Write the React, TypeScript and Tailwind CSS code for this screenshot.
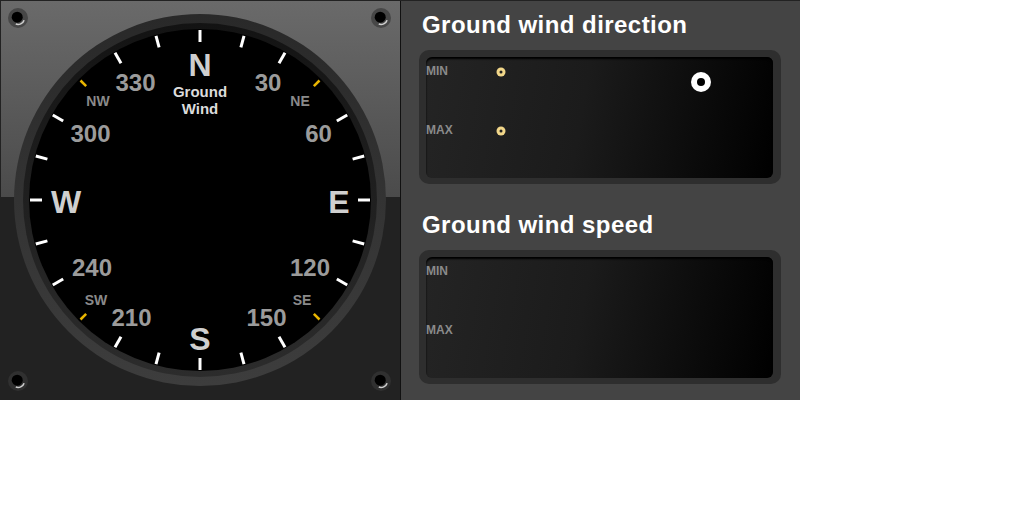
const FONT = "Liberation Sans, Arial, Helvetica, sans-serif";

const cardinals = [
  { t: "N", x: 200, y: 76 },
  { t: "E", x: 339, y: 213 },
  { t: "S", x: 200, y: 350 },
  { t: "W", x: 66, y: 213 },
];

const degrees = [
  { t: "30", x: 268, y: 91 },
  { t: "60", x: 318.5, y: 142 },
  { t: "120", x: 310, y: 276 },
  { t: "150", x: 266.5, y: 326 },
  { t: "210", x: 131.5, y: 326 },
  { t: "240", x: 92, y: 276 },
  { t: "300", x: 90.5, y: 142 },
  { t: "330", x: 135.5, y: 91 },
];

const intercardinals = [
  { t: "NW", x: 98, y: 106 },
  { t: "NE", x: 300, y: 106 },
  { t: "SW", x: 96, y: 305 },
  { t: "SE", x: 302, y: 305 },
];

function Screw({ x, y, fill }: { x: number; y: number; fill: string }) {
  // highlight arc on the lower right of the hole
  const r = 6.5;
  const a1 = (20 * Math.PI) / 180;
  const a2 = (110 * Math.PI) / 180;
  const p1 = [x + r * Math.cos(a1), y + r * Math.sin(a1)];
  const p2 = [x + r * Math.cos(a2), y + r * Math.sin(a2)];
  return (
    <g>
      <circle cx={x} cy={y} r={10} fill={fill} />
      <path
        d={`M${p1[0]} ${p1[1]} A${r} ${r} 0 0 1 ${p2[0]} ${p2[1]}`}
        stroke="#d0d0d0"
        strokeWidth={1.6}
        fill="none"
      />
      <circle cx={x - 0.8} cy={y - 0.8} r={5.5} fill="#000" />
    </g>
  );
}

function Compass() {
  const ticks = Array.from({ length: 24 }, (_, i) => i * 15);
  return (
    <svg width={399} height={399} viewBox="1 1 399 399" className="block">
      <defs>
        <linearGradient id="ring" x1="0" y1="0" x2="0" y2="1">
          <stop offset="0" stopColor="#292929" />
          <stop offset="1" stopColor="#3d3d3d" />
        </linearGradient>
        <linearGradient id="band" x1="0" y1="0" x2="0" y2="1">
          <stop offset="0" stopColor="#131313" />
          <stop offset="1" stopColor="#2c2c2c" />
        </linearGradient>
      </defs>
      <Screw x={18} y={18} fill="#474747" />
      <Screw x={381} y={18} fill="#474747" />
      <Screw x={18} y={381} fill="#303030" />
      <Screw x={381} y={381} fill="#303030" />

      <circle cx={200} cy={200} r={186} fill="url(#ring)" />
      <circle cx={200} cy={200} r={177} fill="url(#band)" />
      <circle cx={200} cy={200} r={171} fill="#000" />

      {ticks.map((deg) => {
        const gold = deg % 90 === 45;
        const rad = (deg * Math.PI) / 180;
        const r1 = gold ? 161 : 158;
        const r2 = gold ? 169 : 170;
        return (
          <line
            key={deg}
            x1={200 + r1 * Math.sin(rad)}
            y1={200 - r1 * Math.cos(rad)}
            x2={200 + r2 * Math.sin(rad)}
            y2={200 - r2 * Math.cos(rad)}
            stroke={gold ? "#e9b500" : "#ffffff"}
            strokeWidth={gold ? 2.5 : 3}
          />
        );
      })}

      {cardinals.map((c) => (
        <text key={c.t} x={c.x} y={c.y} textAnchor="middle" fontFamily={FONT} fontWeight="bold" fontSize={32} fill="#cfcfcf">
          {c.t}
        </text>
      ))}
      {degrees.map((c) => (
        <text key={c.t} x={c.x} y={c.y} textAnchor="middle" fontFamily={FONT} fontWeight="bold" fontSize={24} fill="#9b9b9b">
          {c.t}
        </text>
      ))}
      {intercardinals.map((c) => (
        <text key={c.t} x={c.x} y={c.y} textAnchor="middle" fontFamily={FONT} fontWeight="bold" fontSize={14} fill="#8a8a8a">
          {c.t}
        </text>
      ))}
      <text x={200} y={97} textAnchor="middle" fontFamily={FONT} fontWeight="bold" fontSize={15} fill="#dcdcdc">
        Ground
      </text>
      <text x={200} y={114} textAnchor="middle" fontFamily={FONT} fontWeight="bold" fontSize={15} fill="#dcdcdc">
        Wind
      </text>
    </svg>
  );
}

function YellowDot({ x, y }: { x: number; y: number }) {
  return (
    <div
      className="absolute w-[9px] h-[9px] -translate-x-1/2 -translate-y-1/2 rounded-full bg-[#f2d78a] flex items-center justify-center"
      style={{ left: x, top: y }}
    >
      <div className="w-[3px] h-[3px] rounded-full bg-[#222]" />
    </div>
  );
}

function WindBox({ title, showMarkers }: { title: string; showMarkers?: boolean }) {
  return (
    <div className="flex flex-col">
      <div className="pl-[3px] h-[26px] leading-[26px] text-[24px] tracking-[0.45px] font-bold text-white">{title}</div>
      <div className="mt-[12px] w-[362px] h-[134px] rounded-[10px] bg-[#2e2e2e] pl-[7px] pr-[8px] pt-[7px] pb-[6px]">
        <div className="relative h-full rounded-[6px] bg-[linear-gradient(100deg,#242424_0%,#1b1b1b_45%,#000_100%)] shadow-[inset_0_2px_2px_#000]">
          <div className="flex flex-col pt-[7px] text-[12px] leading-[14px] font-bold text-[#8a8a8a]">
            <div className="h-[59px]">MIN</div>
            <div>MAX</div>
          </div>
          {showMarkers && (
            <>
              <YellowDot x={75.3} y={14.7} />
              <YellowDot x={75.3} y={74} />
              <div
                className="absolute w-[20px] h-[20px] -translate-x-1/2 -translate-y-1/2 rounded-full bg-white flex items-center justify-center"
                style={{ left: 275, top: 24.7 }}
              >
                <div className="w-[8px] h-[8px] rounded-full bg-black" />
              </div>
            </>
          )}
        </div>
      </div>
    </div>
  );
}

export default function App() {
  return (
    <div className="w-[1024px] h-[512px] bg-white font-['Liberation_Sans',Arial,sans-serif]">
      <div className="w-[800px] h-[400px] flex border-t border-l border-[#222]">
        <div className="w-[399px] h-[399px] bg-[linear-gradient(180deg,#6a6a6a_0%,#4b4b4b_49%,#222_49%,#222_100%)]">
          <Compass />
        </div>
        <div className="flex-1 h-[399px] bg-[#444] border-l border-[#111] pl-[18px] pt-[11px] flex flex-col gap-[28px]">
          <WindBox title="Ground wind direction" showMarkers />
          <WindBox title="Ground wind speed" />
        </div>
      </div>
    </div>
  );
}
